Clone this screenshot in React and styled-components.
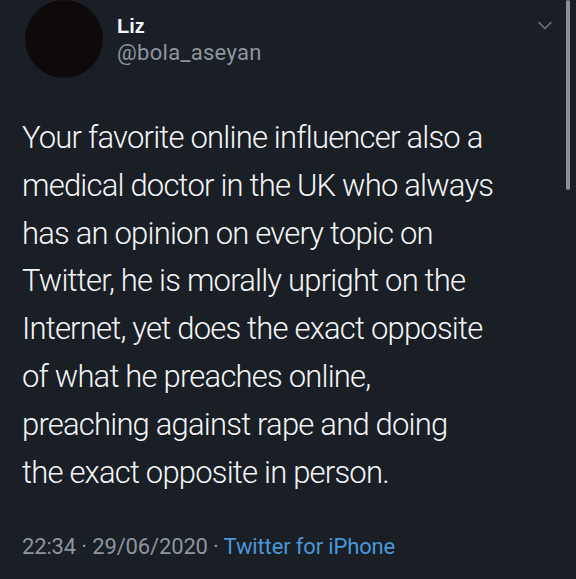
import React from "react";
import styled, { createGlobalStyle } from "styled-components";

const GlobalStyle = createGlobalStyle`
  html, body {
    margin: 0;
    padding: 0;
    background: #1a1e25;
  }
  body {
    font-family: "Liberation Sans", Arial, sans-serif;
  }
`;

const Card = styled.div`
  position: relative;
  width: 576px;
  height: 579px;
  background: #1a1e25;
  overflow: hidden;
  box-sizing: border-box;
  padding: 0 0 0 22px;
`;

const Header = styled.div`
  display: flex;
  align-items: flex-start;
  gap: 14px;
  padding-left: 3px;
`;

const Avatar = styled.div`
  width: 78px;
  height: 78px;
  border-radius: 50%;
  background: #0e0a0b;
  flex-shrink: 0;
`;

const Names = styled.div`
  display: flex;
  flex-direction: column;
  padding-top: 15px;
  flex: 1;
`;

const Name = styled.div`
  color: #f2f3f5;
  font-weight: 700;
  font-size: 20px;
  line-height: 23px;
`;

const Handle = styled.div`
  color: #8d959e;
  font-family: Roboto, "Liberation Sans", sans-serif;
  font-size: 22px;
  letter-spacing: 0.3px;
  line-height: 24px;
  margin-top: 3px;
`;

const Chevron = styled.div`
  padding: 16px 24px 0 0;
  color: #6f767e;
`;

const Body = styled.p`
  margin: 36px 0 0;
  color: #f4f5f7;
  font-family: Roboto, "Liberation Sans", sans-serif;
  font-weight: 300;
  font-size: 31px;
  letter-spacing: -0.8px;
  line-height: 47.8px;
`;

const Meta = styled.div`
  margin-top: 38px;
  font-family: Roboto, "Liberation Sans", sans-serif;
  font-size: 22px;
  letter-spacing: -0.15px;
  color: #8d959e;
`;

const Source = styled.span`
  color: #4a97d8;
`;

const Scrollbar = styled.div`
  position: absolute;
  top: 0;
  right: 6px;
  width: 4px;
  height: 190px;
  background: #8a8f96;
  border-radius: 2px;
`;

const lines = [
  "Your favorite online influencer also a",
  "medical doctor in the UK who always",
  "has an opinion on every topic on",
  "Twitter, he is morally upright on the",
  "Internet, yet does the exact opposite",
  "of what he preaches online,",
  "preaching against rape and doing",
  "the exact opposite in person.",
];

export default function App() {
  return (
    <>
      <GlobalStyle />
      <Card>
        <Header>
          <Avatar />
          <Names>
            <Name>Liz</Name>
            <Handle>@bola_aseyan</Handle>
          </Names>
          <Chevron>
            <svg width="14" height="9" viewBox="0 0 14 9" fill="none">
              <path d="M1 1.5l6 6 6-6" stroke="currentColor" strokeWidth="1.6" strokeLinecap="round" strokeLinejoin="round" />
            </svg>
          </Chevron>
        </Header>
        <Body>
          {lines.map((l, i) => (
            <React.Fragment key={i}>
              {l}
              {i < lines.length - 1 && <br />}
            </React.Fragment>
          ))}
        </Body>
        <Meta>
          22:34 · 29/06/2020 · <Source>Twitter for iPhone</Source>
        </Meta>
        <Scrollbar />
      </Card>
    </>
  );
}
